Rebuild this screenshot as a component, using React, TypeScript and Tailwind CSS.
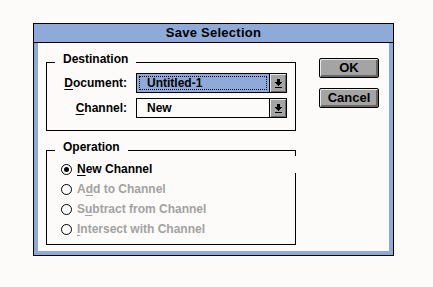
import React from 'react';

const paper = 'bg-[#fcfbf9]';

function DropArrow() {
  return (
    <svg width="7" height="9" viewBox="0 0 7 9" shapeRendering="crispEdges">
      <rect x="2" y="0" width="3" height="3" fill="#000" />
      <rect x="0" y="3" width="7" height="1" fill="#000" />
      <rect x="1" y="4" width="5" height="1" fill="#000" />
      <rect x="2" y="5" width="3" height="1" fill="#000" />
      <rect x="3" y="6" width="1" height="1" fill="#000" />
      <rect x="0" y="8" width="7" height="1" fill="#000" />
    </svg>
  );
}

function Combo({ value, focused }: { value: string; focused?: boolean }) {
  return (
    <div className="ml-[9px] w-[151px] h-[20px] border border-black flex">
      {focused ? (
        <div className="flex-1 bg-[#8eaad8] p-[2px]">
          <div className="h-full border border-dotted border-black pl-[7px] flex items-center">{value}</div>
        </div>
      ) : (
        <div className={`flex-1 ${paper} pl-[10px] flex items-center`}>{value}</div>
      )}
      <div className="w-[17px] border-l border-black bg-[#a3a4a3] shadow-[inset_1px_1px_0_#e8e8e8,inset_-1px_-1px_0_#676767] flex items-center justify-center">
        <DropArrow />
      </div>
    </div>
  );
}

function Radio({ label, hot, checked, disabled }: { label: string; hot: number; checked?: boolean; disabled?: boolean }) {
  return (
    <div className="h-[20px] flex items-center pl-[14px]">
      <div className="w-[11px] h-[11px] rounded-full border border-black bg-white flex items-center justify-center">
        {checked && <div className="w-[5px] h-[5px] rounded-full bg-black" />}
      </div>
      <span className={`ml-[5px] ${disabled ? 'text-[#a2a2a2]' : 'text-black'}`}>
        {label.slice(0, hot)}
        <span className="underline underline-offset-2">{label[hot]}</span>
        {label.slice(hot + 1)}
      </span>
    </div>
  );
}

function Button({ children }: { children: React.ReactNode }) {
  return (
    <div className="w-[60px] h-[20px] border border-black rounded-[2px] bg-[#a3a4a3] shadow-[inset_1px_1px_0_#e8e8e8,inset_-2px_-2px_0_#676767] flex items-center justify-center text-[13px]">
      {children}
    </div>
  );
}

export default function App() {
  return (
    <div className={`w-[433px] h-[287px] ${paper} pl-[33px] pt-[23px] font-['Liberation_Sans',Arial,sans-serif] font-bold text-[12px] text-black`}>
      <div className="w-[361px] h-[233px] border border-black bg-[#8eaad8] flex flex-col">
        <div className="h-[19px] border-b border-black flex items-center justify-center text-[13px] tracking-[0.25px]">
          Save Selection
        </div>

        <div className="flex-1 px-[4px] pb-[4px] flex">
          <div className={`flex-1 ${paper} pl-[8px] flex`}>
            {/* left column: group boxes */}
            <div className="w-[250px] flex flex-col">
              <div className="relative mt-[19px] h-[69px] border border-black pt-[10px] flex flex-col gap-[5px]">
                <span className={`absolute left-[8px] top-[-11px] px-[8px] ${paper} leading-[14px]`}>Destination</span>
                <div className="h-[20px] flex items-center">
                  <span className="w-[80px] text-right">
                    <span className="underline underline-offset-2">D</span>ocument:
                  </span>
                  <Combo value="Untitled-1" focused />
                </div>
                <div className="h-[20px] flex items-center">
                  <span className="w-[80px] text-right">
                    <span className="underline underline-offset-2">C</span>hannel:
                  </span>
                  <Combo value="New" />
                </div>
              </div>

              <div className="relative mt-[19px] h-[95px] border border-black pt-[8px]">
                <span className={`absolute left-[8px] top-[-11px] px-[8px] ${paper} leading-[14px]`}>Operation</span>
                <span className={`absolute right-[-1px] top-[5px] w-px h-[17px] ${paper}`} />
                <Radio label="New Channel" hot={0} checked />
                <Radio label="Add to Channel" hot={1} disabled />
                <Radio label="Subtract from Channel" hot={1} disabled />
                <Radio label="Intersect with Channel" hot={0} disabled />
              </div>
            </div>

            {/* right column: buttons */}
            <div className="ml-[23px] pt-[15px] flex flex-col gap-[10px]">
              <Button>OK</Button>
              <Button>Cancel</Button>
            </div>
          </div>
        </div>
      </div>
    </div>
  );
}
